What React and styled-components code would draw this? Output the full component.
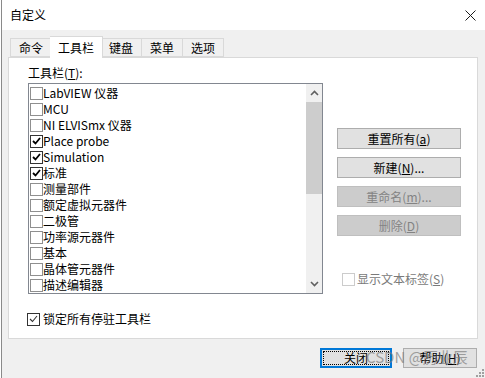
import React from 'react';
import styled, { createGlobalStyle } from 'styled-components';

const GlobalStyle = createGlobalStyle`
    html, body {
        margin: 0;
        padding: 0;
        background: #ffffff;
    }
    body {
        font-family: "Noto Sans CJK SC", "Liberation Sans", sans-serif;
        font-size: 12px;
        color: #000000;
    }
`;

const toolbars = [
    { name: 'LabVIEW 仪器', on: false },
    { name: 'MCU', on: false },
    { name: 'NI ELVISmx 仪器', on: false },
    { name: 'Place probe', on: true },
    { name: 'Simulation', on: true },
    { name: '标准', on: true },
    { name: '测量部件', on: false },
    { name: '额定虚拟元器件', on: false },
    { name: '二极管', on: false },
    { name: '功率源元器件', on: false },
    { name: '基本', on: false },
    { name: '晶体管元器件', on: false },
    { name: '描述编辑器', on: false },
];

const tabs = ['命令', '工具栏', '键盘', '菜单', '选项'];

const Window = styled.div`
    position: relative;
    box-sizing: border-box;
    width: 484px;
    height: 378px;
    margin-left: 1px;
    border-left: 1px solid #8a8a8a;
    display: flex;
    flex-direction: column;
    overflow: hidden;
`;

const TitleBar = styled.div`
    height: 30px;
    flex-shrink: 0;
    background: #ffffff;
    display: flex;
    align-items: center;
    justify-content: space-between;
    padding: 0 9px 0 8px;
    line-height: 16px;
`;

const Body = styled.div`
    flex: 1;
    background: #f0f0f0;
    padding: 6px 7px 0 6px;
    display: flex;
    flex-direction: column;
`;

const TabRow = styled.div`
    position: relative;
    z-index: 1;
    height: 22px;
    margin-bottom: -1px;
    padding-left: 2px;
    display: flex;
    align-items: flex-start;
`;

const Tab = styled.div`
    box-sizing: border-box;
    padding: 0 8px;
    line-height: 18px;
    border: 1px solid #d9d9d9;
    ${(p) => p.$active ? `
        height: 22px;
        margin: 0 -2px;
        background: #ffffff;
        border-bottom: none;
        position: relative;
        z-index: 2;
        line-height: 21px;
    ` : `
        height: 19px;
        margin-top: 2px;
        background: #f0f0f0;
        & + & { border-left: none; }
    `}
`;

const Panel = styled.div`
    box-sizing: border-box;
    height: 282px;
    background: #ffffff;
    border: 1px solid #d9d9d9;
    padding: 7px 15px 0 19px;
    display: flex;
    flex-direction: column;
`;

const Columns = styled.div`
    display: flex;
`;

const LeftColumn = styled.div`
    display: flex;
    flex-direction: column;
`;

const Label = styled.div`
    line-height: 16px;
    margin-bottom: 2px;
`;

const ListBox = styled.div`
    box-sizing: border-box;
    width: 295px;
    height: 211px;
    border: 1px solid #828790;
    display: flex;
    overflow: hidden;
`;

const Rows = styled.div`
    flex: 1;
    padding-top: 1px;
    overflow: hidden;
`;

const Row = styled.div`
    height: 16px;
    display: flex;
    align-items: center;
    padding-left: 1px;
    line-height: 16px;
    white-space: nowrap;
`;

const ScrollBar = styled.div`
    width: 16px;
    background: #f0f0f0;
    display: flex;
    flex-direction: column;
`;

const ScrollArrow = styled.div`
    height: 18px;
    display: flex;
    align-items: center;
    justify-content: center;
`;

const ScrollTrack = styled.div`
    flex: 1;
    display: flex;
    flex-direction: column;
`;

const Thumb = styled.div`
    height: 92px;
    background: #cdcdcd;
`;

const Box = styled.span`
    box-sizing: border-box;
    width: 13px;
    height: 13px;
    flex-shrink: 0;
    border: 1px solid ${(p) => p.$disabled ? '#cccccc' : p.$checked ? '#333333' : '#8f8f8f'};
    background: #ffffff;
    display: inline-flex;
    align-items: center;
    justify-content: center;
    margin-right: ${(p) => p.$gap || 0}px;
`;

const RightColumn = styled.div`
    margin-left: 14px;
    padding-top: 63px;
    display: flex;
    flex-direction: column;
`;

const SideButton = styled.div`
    box-sizing: border-box;
    width: 124px;
    height: 21px;
    margin-bottom: 8px;
    text-align: center;
    line-height: 19px;
    background: ${(p) => p.$disabled ? '#cccccc' : '#e1e1e1'};
    border: 1px solid ${(p) => p.$disabled ? '#bfbfbf' : '#adadad'};
    color: ${(p) => p.$disabled ? '#838383' : '#000000'};
`;

const CheckLine = styled.div`
    display: flex;
    align-items: center;
    height: 16px;
    line-height: 16px;
    margin-top: ${(p) => p.$top || 0}px;
    margin-left: ${(p) => p.$left || 0}px;
    color: ${(p) => p.$disabled ? '#7a7a7a' : '#000000'};
`;

const Footer = styled.div`
    display: flex;
    justify-content: flex-end;
    gap: 11px;
    margin-top: 9px;
    padding-right: 1px;
`;

const FooterButton = styled.div`
    box-sizing: border-box;
    width: ${(p) => p.$w}px;
    height: 20px;
    line-height: 18px;
    text-align: center;
    background: #e1e1e1;
    border: 1px solid ${(p) => p.$focus ? '#0078d7' : '#adadad'};
    box-shadow: ${(p) => p.$focus ? 'inset 0 0 0 1px #0078d7' : 'none'};
    position: relative;
    ${(p) => p.$focus && `
        &::after {
            content: '';
            position: absolute;
            inset: 2px;
            border: 1px dotted #000000;
        }
    `}
`;

const Watermark = styled.div`
    position: absolute;
    left: 364px;
    top: 347px;
    font-size: 15px;
    line-height: 20px;
    color: rgba(125, 125, 125, 0.7);
    pointer-events: none;
    white-space: nowrap;
`;

const Grip = styled.svg`
    position: absolute;
    right: 1px;
    bottom: 1px;
`;

const CheckMark = ({ color = '#000', thin }) => (
    <svg width="9" height="8" viewBox="0 0 9 8">
        <polyline
            points="1,4 3.5,6.5 8,1"
            fill="none"
            stroke={color}
            strokeWidth={thin ? 1.1 : 1.8}
        />
    </svg>
);

const Chevron = ({ up }) => (
    <svg width="9" height="6" viewBox="0 0 9 6">
        <polyline
            points={up ? '1,5 4.5,1.5 8,5' : '1,1 4.5,4.5 8,1'}
            fill="none"
            stroke="#606060"
            strokeWidth="1.6"
        />
    </svg>
);

const CloseIcon = () => (
    <svg width="11" height="11" viewBox="0 0 11 11">
        <path d="M0.5 0.5 L10.5 10.5 M10.5 0.5 L0.5 10.5" stroke="#1a1a1a" strokeWidth="1" />
    </svg>
);

const App = () => {
    return (
        <>
            <GlobalStyle />
            <Window>
                <TitleBar>
                    <span>自定义</span>
                    <CloseIcon />
                </TitleBar>
                <Body>
                    <TabRow>
                        {tabs.map((t) => (
                            <Tab key={t} $active={t === '工具栏'}>{t}</Tab>
                        ))}
                    </TabRow>
                    <Panel>
                        <Columns>
                            <LeftColumn>
                                <Label>工具栏(<u>T</u>):</Label>
                                <ListBox>
                                    <Rows>
                                        {toolbars.map((tb) => (
                                            <Row key={tb.name}>
                                                <Box $checked={tb.on}>
                                                    {tb.on && <CheckMark />}
                                                </Box>
                                                {tb.name}
                                            </Row>
                                        ))}
                                    </Rows>
                                    <ScrollBar>
                                        <ScrollArrow><Chevron up /></ScrollArrow>
                                        <ScrollTrack>
                                            <Thumb />
                                        </ScrollTrack>
                                        <ScrollArrow><Chevron /></ScrollArrow>
                                    </ScrollBar>
                                </ListBox>
                            </LeftColumn>
                            <RightColumn>
                                <SideButton>重置所有(<u>a</u>)</SideButton>
                                <SideButton>新建(<u>N</u>)...</SideButton>
                                <SideButton $disabled>重命名(<u>m</u>)...</SideButton>
                                <SideButton $disabled>删除(<u>D</u>)</SideButton>
                                <CheckLine $disabled $top={27} $left={5}>
                                    <Box $disabled $gap={2} />
                                    显示文本标签(<u>S</u>)
                                </CheckLine>
                            </RightColumn>
                        </Columns>
                        <CheckLine $top={17} $left={-1}>
                            <Box $checked $gap={3}>
                                <CheckMark color="#333" thin />
                            </Box>
                            锁定所有停驻工具栏
                        </CheckLine>
                    </Panel>
                    <Footer>
                        <FooterButton $w={72} $focus>关闭</FooterButton>
                        <FooterButton $w={74}>帮助(<u>H</u>)</FooterButton>
                    </Footer>
                </Body>
                <Watermark>CSDN @历业辰</Watermark>
                <Grip width="8" height="8" viewBox="0 0 8 8">
                    <rect x="6" y="0" width="2" height="2" fill="#a0a0a0" />
                    <rect x="3" y="3" width="2" height="2" fill="#a0a0a0" />
                    <rect x="6" y="3" width="2" height="2" fill="#a0a0a0" />
                    <rect x="0" y="6" width="2" height="2" fill="#a0a0a0" />
                    <rect x="3" y="6" width="2" height="2" fill="#a0a0a0" />
                    <rect x="6" y="6" width="2" height="2" fill="#a0a0a0" />
                </Grip>
            </Window>
        </>
    );
};

export default App;
